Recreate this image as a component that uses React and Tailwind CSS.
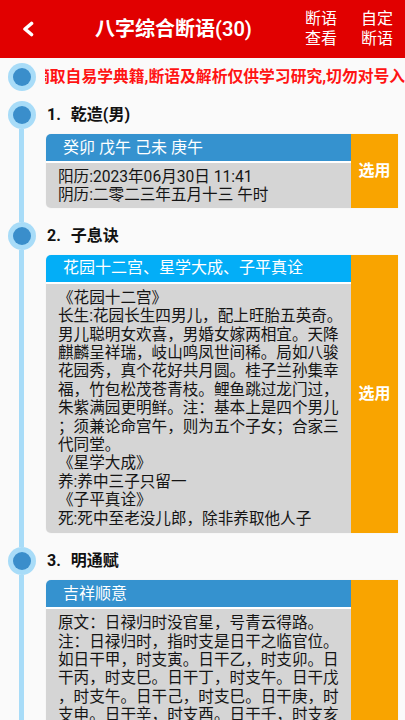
import React from "react";

const FONT = { fontFamily: "Roboto, 'Noto Sans CJK SC', 'Noto Sans', sans-serif" };

function Dot() {
  return (
    <div className="ml-[8px] flex h-[28px] w-[28px] shrink-0 items-center justify-center rounded-full bg-[#a8dcf8]">
      <div className="h-[18px] w-[18px] rounded-full bg-[#3a8ecb]" />
    </div>
  );
}

function Card({ head, headColor, lines, bodyPt = "pt-[5px]", bodyPb = "pb-[5px]" }) {
  return (
    <div className="flex overflow-hidden rounded-l-[5px] shadow-[0_0_1px_rgba(0,0,0,0.15)]">
      <div className="flex min-w-0 flex-1 flex-col">
        <div className={`h-[27px] ${headColor} flex items-center pl-[17px] text-[16px] leading-none text-white whitespace-nowrap`}>
          {head}
        </div>
        <div className="h-[2px] bg-white" />
        <div className={`flex-1 bg-[#d5d5d5] pl-[12px] ${bodyPt} ${bodyPb} text-[15.6px] leading-[18.4px] text-[#141414]`}>
          {lines.map((l, i) => (
            <div key={i} className="whitespace-nowrap">{l}</div>
          ))}
        </div>
      </div>
      <div className="flex w-[47px] shrink-0 items-center justify-center bg-[#f9a400] text-[16px] font-bold text-white">
        选用
      </div>
    </div>
  );
}

function Item({ num, title, children, last }) {
  return (
    <div className="flex">
      <div className="flex w-[46px] shrink-0 flex-col">
        <Dot />
        <div className="ml-[19px] w-[5px] flex-1 bg-[#a8dcf8]" />
      </div>
      <div className={`min-w-0 flex-1 pr-[7px] ${last ? "" : "pb-[14px]"}`}>
        <div className="flex h-[28px] items-center gap-[10px] pl-[1px] text-[16px] font-bold text-[#111]">
          <span>{num}</span>
          <span>{title}</span>
        </div>
        <div className="mt-[5px]">{children}</div>
      </div>
    </div>
  );
}

export default function App() {
  const card1 = ["阳历:2023年06月30日 11:41", "阴历:二零二三年五月十三 午时"];
  const card2 = [
    "《花园十二宫》",
    "长生:花园长生四男儿，配上旺胎五英奇。",
    "男儿聪明女欢喜，男婚女嫁两相宜。天降",
    "麒麟呈祥瑞，岐山鸣凤世间稀。局如八骏",
    "花园秀，真个花好共月圆。桂子兰孙集幸",
    "福，竹包松茂苍青枝。鲤鱼跳过龙门过，",
    "朱紫满园更明鲜。注：基本上是四个男儿",
    "；须兼论命宫午，则为五个子女；合家三",
    "代同堂。",
    "《星学大成》",
    "养:养中三子只留一",
    "《子平真诠》",
    "死:死中至老没儿郎，除非养取他人子",
  ];
  const card3 = [
    "原文：日禄归时没官星，号青云得路。",
    "注：日禄归时，指时支是日干之临官位。",
    "如日干甲，时支寅。日干乙，时支卯。日",
    "干丙，时支巳。日干丁，时支午。日干戊",
    "，时支午。日干己，时支巳。日干庚，时",
    "支申。日干辛，时支酉。日干壬，时支亥",
    "。日干癸，时支子。此为日禄归时。如柱",
    "中无官星，又无刑冲破害，主人一生衣食",
    "丰足，平步青云，富贵安康。若柱中见官",
    "星，则为禄被官压，反主不吉。",
    "断语：日禄归时，青云得路，主聪明伶俐",
    "，少年得志，一生吉祥顺意。",
    "《明通赋》",
    "日禄归时没官星，号青云得路。",
    "注：此格以身旺为美，不宜再见官杀。",
    "运行身旺之地，名利双收。",
  ];

  return (
    <div className="min-h-[720px] bg-[#fafafa]" style={FONT}>
      {/* Header */}
      <div className="flex h-[58px] items-center bg-[#e10000] text-white">
        <div className="flex w-[95px] shrink-0 items-center pl-[21px]">
          <svg width="14" height="16" viewBox="0 0 14 16" fill="none">
            <polyline points="10.5,2.5 4,8 10.5,13.5" stroke="white" strokeWidth="3.6" strokeLinecap="round" strokeLinejoin="round" />
          </svg>
        </div>
        <div className="whitespace-nowrap text-[20px] font-semibold">八字综合断语(30)</div>
        <div className="flex-1" />
        <div className="flex gap-[24px] pr-[12px] text-[16px] leading-[20px]">
          <div className="flex flex-col">
            <span>断语</span>
            <span>查看</span>
          </div>
          <div className="flex flex-col">
            <span>自定</span>
            <span>断语</span>
          </div>
        </div>
      </div>

      {/* Marquee row */}
      <div className="mt-[5px] flex items-center">
        <Dot />
        <div className="ml-[9px] min-w-0 flex-1 overflow-hidden">
          <div className="ml-[-11px] whitespace-nowrap text-[15.8px] font-bold text-[#ff1414]">
            摘取自易学典籍,断语及解析仅供学习研究,切勿对号入座
          </div>
        </div>
      </div>

      {/* Timeline list */}
      <div className="mt-[10px]">
        <Item num="1." title="乾造(男)">
          <Card head="癸卯 戊午 己未 庚午" headColor="bg-[#3592cf]" lines={card1} bodyPt="pt-[5px]" bodyPb="pb-[3px]" />
        </Item>
        <Item num="2." title="子息诀">
          <Card head="花园十二宫、星学大成、子平真诠" headColor="bg-[#03aef7]" lines={card2} />
        </Item>
        <Item num="3." title="明通赋" last>
          <Card head="吉祥顺意" headColor="bg-[#3592cf]" lines={card3} />
        </Item>
      </div>
    </div>
  );
}
